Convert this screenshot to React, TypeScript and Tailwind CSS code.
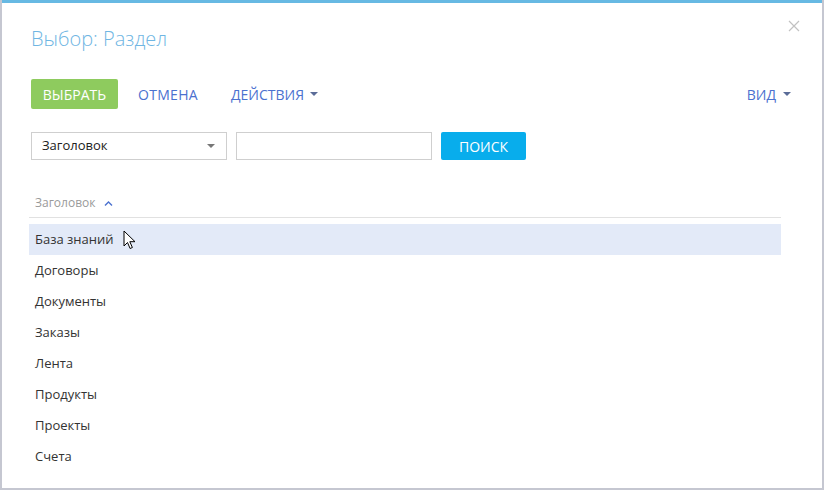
import React from 'react';

const items = ['База знаний', 'Договоры', 'Документы', 'Заказы', 'Лента', 'Продукты', 'Проекты', 'Счета'];

const Caret: React.FC<{ className?: string }> = ({ className }) => (
  <svg width="8" height="4" viewBox="0 0 8 4" className={className}>
    <path d="M0 0h8L4 4z" fill="currentColor" />
  </svg>
);

const Pointer: React.FC = () => (
  <svg width="13" height="20" viewBox="0 0 13 20" className="ml-[9px] mt-[6px]">
    <path
      d="M1 1v15l3.5-3.5 2.6 6 2.3-1-2.6-5.8H12z"
      fill="#fff"
      stroke="#000"
      strokeWidth="1"
      strokeLinejoin="round"
    />
  </svg>
);

export default function App() {
  return (
    <div
      className="w-[824px] h-[490px] bg-white border-l-2 border-r-2 border-b-2 border-[#c5c7d1] flex flex-col"
      style={{ fontFamily: '"Open Sans", "Noto Sans", sans-serif' }}
    >
      <div className="h-[3px] bg-[#67b9e3]" />
      <div className="relative flex-1 pl-[27px] pr-[41px]">
        <button className="absolute right-[22px] top-[17px] text-[#c2c2c2]">
          <svg width="12" height="12" viewBox="0 0 12 12">
            <path d="M1 1l10 10M11 1L1 11" stroke="currentColor" strokeWidth="1.2" />
          </svg>
        </button>

        <h1 className="mt-[22px] ml-[2px] text-[20px] leading-[28px] font-light text-[#6fb6e3]">
          Выбор: Раздел
        </h1>

        <div className="mt-[26px] ml-[2px] flex items-center h-[30px] text-[14px]">
          <button className="h-[30px] w-[87px] rounded-[2px] bg-[#8ecb5e] text-white">ВЫБРАТЬ</button>
          <button className="ml-[20px] text-[#4b71cf] tracking-[0.3px]">ОТМЕНА</button>
          <button className="ml-[33px] flex items-center gap-[6px] text-[#4b71cf]">
            ДЕЙСТВИЯ
            <Caret className="text-[#5b6c98]" />
          </button>
          <button className="ml-auto mr-[-10px] flex items-center gap-[7px] text-[#4b71cf]">
            ВИД
            <Caret className="text-[#5b6c98]" />
          </button>
        </div>

        <div className="mt-[23px] ml-[2px] flex items-center h-[28px] text-[13px]">
          <div className="w-[196px] h-[28px] border border-[#cfcfcf] flex items-center justify-between pl-[10px] pr-[11px] text-[#222]">
            Заголовок
            <Caret className="text-[#777]" />
          </div>
          <div className="ml-[9px] w-[196px] h-[28px] border border-[#cfcfcf]" />
          <button className="ml-[9px] w-[85px] h-[28px] rounded-[2px] bg-[#08adec] text-white text-[14px]">
            ПОИСК
          </button>
        </div>

        <div className="mt-[31px] h-[27px] border-b border-[#e1e1e1] flex items-center pl-[6px] text-[12px] text-[#9a9a9a] pb-[2px]">
          Заголовок
          <svg width="9" height="5" viewBox="0 0 9 5" className="ml-[9px]">
            <path d="M1 4.5L4.5 1 8 4.5" fill="none" stroke="#4b71cf" strokeWidth="1.4" />
          </svg>
        </div>

        <div className="mt-[6px]">
          {items.map((item, i) => (
            <div
              key={item}
              className={`h-[31px] flex items-start pl-[6px] text-[13px] text-[#333] ${i === 0 ? 'bg-[#e3eaf8]' : ''}`}
            >
              <span className="leading-[31px]">{item}</span>
              {i === 0 && <Pointer />}
            </div>
          ))}
        </div>
      </div>
    </div>
  );
}
